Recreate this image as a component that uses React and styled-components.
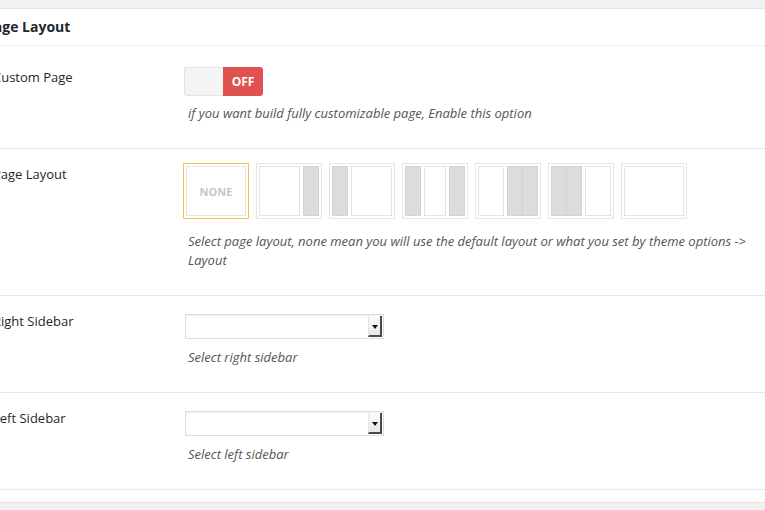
import styled, { createGlobalStyle } from "styled-components"

const GlobalStyle = createGlobalStyle`
    body{
        margin: 0;
        background-color: #F1F1F1;
        font-family: 'Open Sans', 'DejaVu Sans', sans-serif;
        overflow: hidden;
    }
`

const layouts = [
    { id: "none" },
    { id: "right", panes: ["main", "side"] },
    { id: "left", panes: ["side", "main"] },
    { id: "both", panes: ["side", "main", "side"] },
    { id: "right2", panes: ["main", "double"] },
    { id: "left2", panes: ["double", "main"] },
    { id: "full", panes: ["main"] },
]

function Pane({ type }){
    if (type === "double") {
        return (
            <Double>
                <Side />
                <Side />
            </Double>
        )
    }
    return type === "side" ? <Side /> : <Main />
}

function LayoutOption({ layout, selected }){
    return (
        <OptionBox selected={selected}>
            {layout.id === "none"
                ? <Main><NoneText>NONE</NoneText></Main>
                : layout.panes.map((p, i) => <Pane key={i} type={p} />)}
        </OptionBox>
    )
}

function SidebarSelect(){
    return (
        <SelectBox>
            <Arrow />
        </SelectBox>
    )
}

export default function App(){
    return (
        <>
            <GlobalStyle />
            <Panel>
                <Header>Page Layout</Header>
                <Rows>
                    <Row first>
                        <Label>Custom Page</Label>
                        <Value>
                            <Toggle>
                                <ToggleOff />
                                <ToggleLabel>OFF</ToggleLabel>
                            </Toggle>
                            <Desc gap={8}>if you want build fully customizable page, Enable this option</Desc>
                        </Value>
                    </Row>
                    <Row>
                        <Label>Page Layout</Label>
                        <Value>
                            <Options>
                                {layouts.map((l) => (
                                    <LayoutOption key={l.id} layout={l} selected={l.id === "none"} />
                                ))}
                            </Options>
                            <Desc gap={13}>Select page layout, none mean you will use the default layout or what you set by theme options -&gt; Layout</Desc>
                        </Value>
                    </Row>
                    <Row>
                        <Label>Right Sidebar</Label>
                        <Value>
                            <SidebarSelect />
                            <Desc gap={9}>Select right sidebar</Desc>
                        </Value>
                    </Row>
                    <Row>
                        <Label>Left Sidebar</Label>
                        <Value>
                            <SidebarSelect />
                            <Desc gap={9}>Select left sidebar</Desc>
                        </Value>
                    </Row>
                </Rows>
            </Panel>
        </>
    )
}

const Panel = styled.div`
    box-sizing: border-box;
    margin-top: 8px;
    margin-left: -20px;
    width: 820px;
    background-color: #FFFFFF;
    border: 1px solid #E5E5E5;
    box-shadow: 0 1px 1px rgba(0,0,0,0.05);
`

const Header = styled.h3`
    margin: 0;
    padding: 8px 12px 8px 4px;
    font-size: 14px;
    line-height: 20px;
    font-weight: 700;
    color: #23282D;
    border-bottom: 1px solid #EEEEEE;
`

const Rows = styled.div`
    padding-bottom: 12px;
`

const Row = styled.div`
    display: flex;
    margin-top: ${(p) => (p.first ? "6px" : "0")};
    padding: 15px 0 25px 12px;
    border-bottom: 1px dotted #D6D6D6;
`

const Label = styled.div`
    width: 191px;
    flex-shrink: 0;
    font-size: 13px;
    line-height: 20px;
    color: #23282D;
`

const Value = styled.div`
    width: 572px;
    display: flex;
    flex-direction: column;
    align-items: flex-start;
`

const Desc = styled.p`
    margin: ${(p) => p.gap}px 0 0 0;
    padding-left: 4px;
    font-size: 13px;
    line-height: 19px;
    font-style: italic;
    color: #555555;
`

const Toggle = styled.div`
    display: flex;
    width: 79px;
    height: 29px;
`

const ToggleOff = styled.div`
    box-sizing: border-box;
    width: 39px;
    background-color: #F4F4F4;
    border: 1px solid #E3E3E3;
    border-right: none;
    border-radius: 3px 0 0 3px;
`

const ToggleLabel = styled.div`
    flex: 1;
    display: flex;
    justify-content: center;
    align-items: center;
    background-color: #E0524F;
    color: #FFFFFF;
    font-size: 12px;
    font-weight: 700;
    border-radius: 0 3px 3px 0;
`

const Options = styled.div`
    display: flex;
    gap: 7px;
    margin-left: -1px;
    margin-top: -1px;
`

const OptionBox = styled.div`
    box-sizing: border-box;
    display: flex;
    gap: 3px;
    width: 66px;
    height: 56px;
    padding: 2px;
    border: 1px solid ${(p) => (p.selected ? "#F2C34B" : "#E6E6E6")};
`

const Main = styled.div`
    box-sizing: border-box;
    flex: 1;
    display: flex;
    justify-content: center;
    align-items: center;
    background-color: #FFFFFF;
    border: 1px solid #E3E3E3;
`

const Side = styled.div`
    box-sizing: border-box;
    width: 16px;
    background-color: #DCDCDC;
    border: 1px solid #D2D2D2;
`

const Double = styled.div`
    display: flex;
    width: 31px;

    div{
        flex: 1;
    }
    div + div{
        border-left: none;
    }
`

const NoneText = styled.span`
    font-size: 11px;
    font-weight: 700;
    color: #C6C6C6;
`

const SelectBox = styled.div`
    box-sizing: border-box;
    display: flex;
    justify-content: flex-end;
    align-items: center;
    width: 199px;
    height: 25px;
    margin-top: 3px;
    margin-left: 1px;
    padding-right: 1px;
    border: 1px solid #DDDDDD;
    box-shadow: inset 0 1px 2px rgba(0,0,0,0.07);
    background-color: #FFFFFF;
`

const Arrow = styled.span`
    box-sizing: border-box;
    display: flex;
    justify-content: center;
    align-items: center;
    width: 14px;
    height: 21px;
    background: linear-gradient(#FBFBFB, #E9E9E9);
    border-right: 2px solid #4A4A4A;
    border-bottom: 2px solid #4A4A4A;
    border-left: 1px solid #E4E4E4;

    &::after{
        content: "";
        margin-top: 2px;
        border-left: 3px solid transparent;
        border-right: 3px solid transparent;
        border-top: 4px solid #111111;
    }
`
